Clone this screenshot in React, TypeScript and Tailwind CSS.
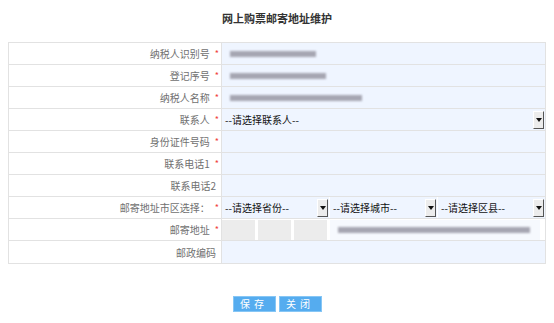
import React from 'react';

const font = { fontFamily: '"Noto Sans CJK SC", "Microsoft YaHei", sans-serif' };

function Arrow() {
  return (
    <div className="flex h-[18px] w-[11px] items-center justify-center border-b border-r border-t border-l border-b-[#555] border-r-[#555] border-t-[#fff] border-l-[#fff] bg-[#ececec]">
      <svg width="6" height="4" viewBox="0 0 6 4">
        <path d="M0 0h6L3 4z" fill="#111" />
      </svg>
    </div>
  );
}

function Select({ text, className }: { text: string; className?: string }) {
  return (
    <div className={`flex h-full items-center justify-between pl-[3px] pr-[1px] ${className ?? ''}`}>
      <span className="text-[10px] text-[#111]">{text}</span>
      <Arrow />
    </div>
  );
}

function Blur({ w }: { w: number }) {
  return (
    <div className="ml-[8px] h-[6px] bg-[#a6a6b2] blur-[1.2px]" style={{ width: w }} />
  );
}

function Row({ label, star, children, white }: { label: string; star?: boolean; children?: React.ReactNode; white?: boolean }) {
  return (
    <div className="flex h-[22px] border-b border-[#e2e2e2] last:border-b-0">
      <div className={`flex w-[213px] shrink-0 items-center justify-end border-r border-[#e2e2e2] text-[10px] text-[#707070] ${star ? 'pr-[2px]' : 'pr-[5px]'}`}>
        <span>{label}</span>
        {star && <span className="ml-[5px] text-[9px] leading-none text-[#f03c3c]">*</span>}
      </div>
      <div className={`flex flex-1 items-center ${white ? 'bg-white' : 'bg-[#eff5ff]'}`}>{children}</div>
    </div>
  );
}

export default function App() {
  return (
    <div className="h-[323px] w-[554px] bg-white" style={font}>
      <div className="flex h-[42px] items-center justify-center pb-[5px]">
        <h1 className="text-[11px] font-bold text-[#333]">网上购票邮寄地址维护</h1>
      </div>
      <div className="mx-[8px] border border-[#e2e2e2]">
        <Row label="纳税人识别号" star>
          <Blur w={86} />
        </Row>
        <Row label="登记序号" star>
          <Blur w={96} />
        </Row>
        <Row label="纳税人名称" star>
          <Blur w={132} />
        </Row>
        <Row label="联系人" star>
          <Select text="--请选择联系人--" className="w-full" />
        </Row>
        <Row label="身份证件号码" star />
        <Row label="联系电话1" star />
        <Row label="联系电话2" />
        <Row label="邮寄地址市区选择：" star>
          <div className="flex h-full w-full gap-[1px] bg-white">
            <Select text="--请选择省份--" className="w-[107px] bg-[#eff5ff]" />
            <Select text="--请选择城市--" className="w-[107px] bg-[#eff5ff]" />
            <Select text="--请选择区县--" className="flex-1 bg-[#eff5ff]" />
          </div>
        </Row>
        <Row label="邮寄地址" star white>
          <div className="flex h-full w-full items-center gap-[3px] py-[1px]">
            <div className="h-[20px] w-[33px] bg-[#ececec]" />
            <div className="h-[20px] w-[33px] bg-[#ececec]" />
            <div className="h-[20px] w-[33px] bg-[#ececec]" />
            <div className="flex h-[20px] w-[210px] items-center bg-[#f6f9fe]">
              <Blur w={192} />
            </div>
          </div>
        </Row>
        <Row label="邮政编码" />
      </div>
      <div className="mt-[32px] flex justify-center gap-[3px]">
        <button className="h-[16px] w-[43px] border border-[#86c6f5] bg-[#55acef] text-[10px] leading-none tracking-[4px] text-white">保存</button>
        <button className="h-[16px] w-[43px] border border-[#86c6f5] bg-[#55acef] text-[10px] leading-none tracking-[4px] text-white">关闭</button>
      </div>
    </div>
  );
}
